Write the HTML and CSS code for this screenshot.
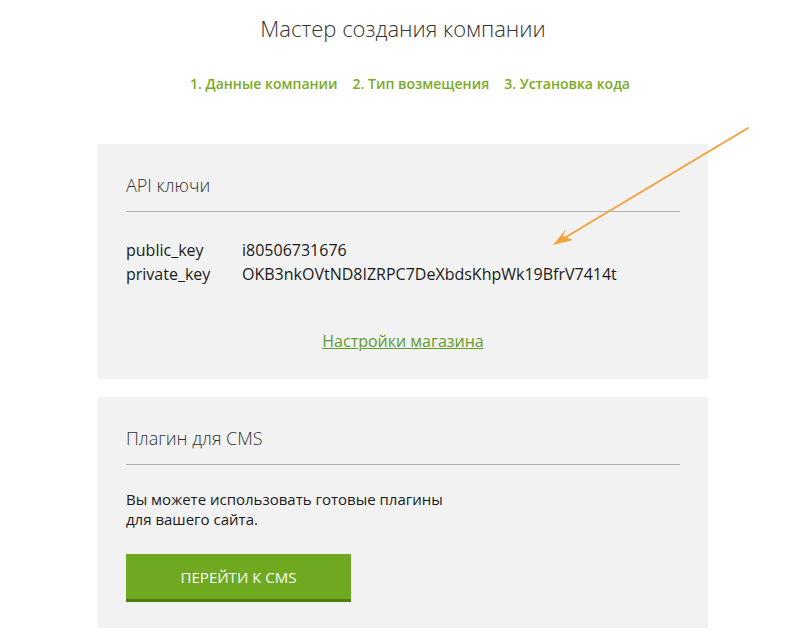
FILE: index.html
```html
<!DOCTYPE html>
<html>
  <head>
    <title>Мастер создания компании</title>
    <meta charset="utf-8">
    <link rel="stylesheet" href="styles.css">
  </head>
  <body>
    <div id="wizard">
      <h1 class="wizard-title">Мастер создания компании</h1>
      <div class="wizard-steps">
        <span>1. Данные компании</span>
        <span>2. Тип возмещения</span>
        <span>3. Установка кода</span>
      </div>

      <div class="panel">
        <h2 class="panel-title">API ключи</h2>
        <div class="keys">
          <span class="key-name">public_key</span>
          <span class="key-value">i80506731676</span>
          <span class="key-name">private_key</span>
          <span class="key-value">OKB3nkOVtND8IZRPC7DeXbdsKhpWk19BfrV7414t</span>
        </div>
        <div class="panel-link">
          <a href="#">Настройки магазина</a>
        </div>
      </div>

      <div class="panel">
        <h2 class="panel-title">Плагин для CMS</h2>
        <p class="panel-text">Вы можете использовать готовые плагины<br>для вашего сайта.</p>
        <a class="button" href="#">Перейти к CMS</a>
      </div>
    </div>

    <!-- hint arrow drawn over the page -->
    <svg class="hint-arrow" width="795" height="633" viewBox="0 0 795 633">
      <line x1="748" y1="128" x2="566" y2="237" stroke="#f4a23c" stroke-width="2" stroke-linecap="round"/>
      <polygon points="553,245 566,229 563,236 573,240" fill="#f4a23c"/>
    </svg>
  </body>
</html>
```

FILE: styles.css
```css
body {
  margin: 0;
  background: #fff;
  font-family: "Open Sans", "Liberation Sans", sans-serif;
  color: #222;
}
#wizard {
  width: 610px;
  margin-left: 98px;
  padding-top: 12px;
}
.wizard-title {
  margin: 0;
  font-size: 22px;
  line-height: 32px;
  font-weight: 300;
  text-align: center;
  color: #333;
}
.wizard-steps {
  display: flex;
  justify-content: center;
  gap: 15px;
  margin-top: 28px;
  padding-left: 14px;
  font-size: 14px;
  line-height: 24px;
  font-weight: 600;
  color: #7aab24;
}
.panel {
  margin-top: 48px;
  padding: 29px 28px 26px;
  background: #f2f2f2;
}
.panel + .panel {
  margin-top: 18px;
}
.panel-title {
  margin: 0;
  padding-bottom: 14px;
  border-bottom: 1px solid #b3b3b3;
  font-size: 18px;
  line-height: 24px;
  font-weight: 300;
  color: #333;
}
.keys {
  display: grid;
  grid-template-columns: 116px auto;
  margin-top: 26px;
  font-size: 16px;
  line-height: 24px;
  color: #1a1a1a;
}
.panel-link {
  margin-top: 43px;
  padding-bottom: 0;
  text-align: center;
  font-size: 16px;
  line-height: 24px;
}
.panel-link a {
  color: #5e9d2a;
}
.panel-text {
  margin: 24px 0 0;
  font-size: 15px;
  line-height: 20px;
  color: #1a1a1a;
}
.button {
  display: block;
  width: 225px;
  height: 45px;
  margin-top: 25px;
  background: #6ea91f;
  border-bottom: 3px solid #4e7d14;
  color: #fff;
  font-size: 15px;
  line-height: 46px;
  text-align: center;
  text-transform: uppercase;
  text-decoration: none;
}
.hint-arrow {
  position: absolute;
  left: 0;
  top: 0;
  pointer-events: none;
}
```
